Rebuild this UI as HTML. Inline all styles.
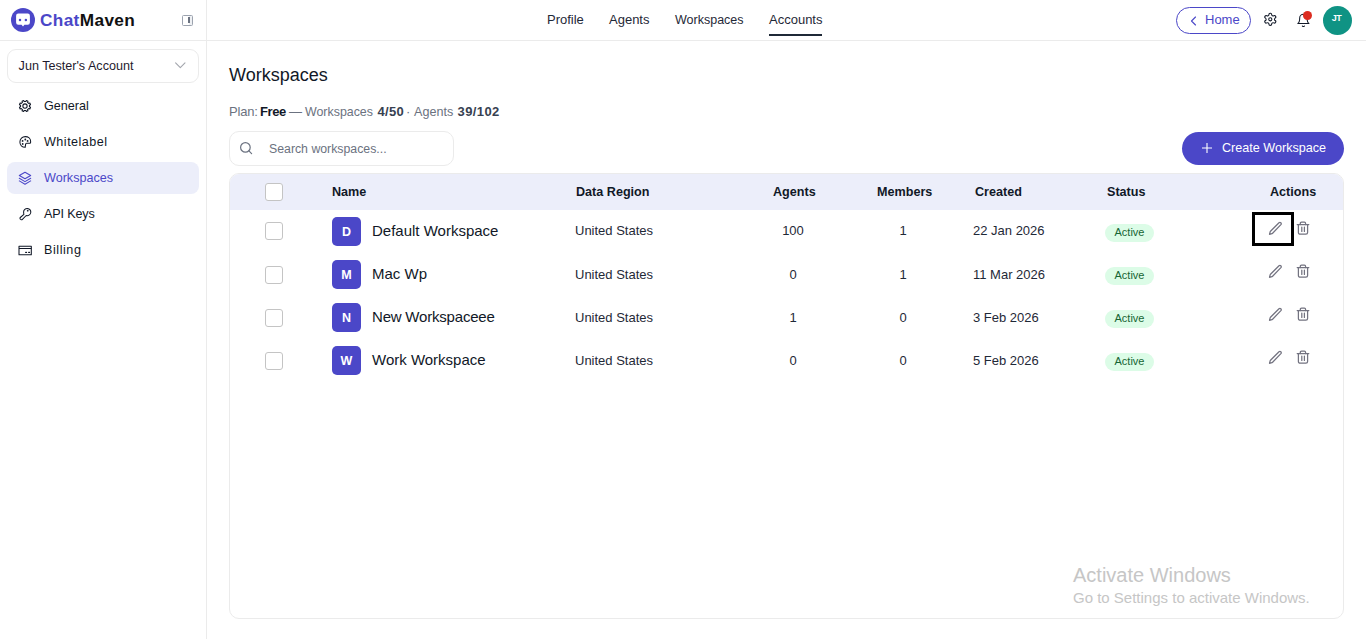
<!DOCTYPE html>
<html><head><meta charset="utf-8">
<style>
*{box-sizing:border-box;margin:0;padding:0}
html,body{width:1366px;height:639px;overflow:hidden;background:#fff;font-family:"Liberation Sans",sans-serif;color:#111827}
body{position:relative}
.abs,.ic{position:absolute}
.ic svg{display:block}
#side{position:absolute;left:0;top:0;width:207px;height:639px;border-right:1px solid #ebebeb}
#hdr{position:absolute;left:0;top:40px;width:1366px;height:1px;background:#ebebeb}
.brand{position:absolute;left:39.8px;top:11px;font-size:16px;font-weight:bold;letter-spacing:0.35px;line-height:20px;white-space:nowrap;transform:scaleX(1.075);transform-origin:0 0}
.sel{position:absolute;left:7px;top:49px;width:192px;height:34px;border:1px solid #ebebeb;border-radius:9px}
.t13{position:absolute;font-size:13px;line-height:16px;white-space:nowrap}
.navbg{position:absolute;left:7px;top:162px;width:192px;height:32px;border-radius:8px;background:#eceefa}
.sn{position:absolute;left:44px;font-size:12.6px;line-height:16px;color:#111827;white-space:nowrap}
.tnav{position:absolute;top:12px;font-size:13px;line-height:16px;color:#1f2937;white-space:nowrap}
.home{position:absolute;left:1176px;top:7px;width:75px;height:27px;border:1px solid #4b47c8;border-radius:14px}
.avatar{position:absolute;left:1323px;top:6px;width:29px;height:29px;border-radius:50%;background:#0f9384;color:#fff;font-size:9px;font-weight:bold;text-align:center;line-height:25.8px;letter-spacing:-0.6px;text-indent:-2px}
.h1{position:absolute;left:229px;top:65px;font-size:18px;line-height:20px;color:#111827;white-space:nowrap}
.pl{position:absolute;top:104px;font-size:13px;line-height:16px;color:#6b7280;white-space:nowrap}
.search{position:absolute;left:229px;top:131px;width:225px;height:35px;border:1px solid #ebebeb;border-radius:10px}
.create{position:absolute;left:1182px;top:132px;width:162px;height:33px;border-radius:16.5px;background:#4b47c8}
.table{position:absolute;left:229px;top:173px;width:1115px;height:446px;border:1px solid #ebebeb;border-radius:10px;overflow:hidden}
.thead{position:absolute;left:0;top:0;width:100%;height:36px;background:#eceefa}
.th{position:absolute;top:184px;font-size:12.6px;font-weight:bold;line-height:16px;color:#111827;white-space:nowrap}
.cb{position:absolute;width:18px;height:18px;border:1px solid #c4c4c4;border-radius:3px;background:#fff}
.av{position:absolute;left:332px;width:29px;height:29px;border-radius:5px;background:#4b47c8;color:#fff;font-size:12.5px;font-weight:bold;text-align:center;line-height:30.5px}
.nm{position:absolute;left:372px;font-size:15px;line-height:17px;color:#111827;white-space:nowrap}
.td{position:absolute;font-size:13px;line-height:16px;color:#1f2937;white-space:nowrap}
.badge{position:absolute;left:1105px;width:49px;height:18px;border-radius:9px;background:#dcfce7;color:#166534;font-size:11px;line-height:16px;text-align:center}
.wm1{position:absolute;left:1073px;top:564.3px;font-size:20px;line-height:23px;color:#c6c6c6;white-space:nowrap}
.wm2{position:absolute;left:1073px;top:589px;font-size:15px;line-height:17px;color:#c6c6c6;white-space:nowrap}
</style></head><body>
<div id="side"></div>
<div id="hdr"></div>
<!-- logo -->
<svg class="abs" style="left:11px;top:8px" width="24" height="24" viewBox="0 0 24 24">
  <circle cx="12" cy="12" r="12" fill="#4b47c8"/>
  <path d="M7.3 5.6h9.4a2.2 2.2 0 0 1 2.2 2.2v6.8a2.2 2.2 0 0 1-2.2 2.2h-3.3l-1.4 1.6l-1.4-1.6h-3.3a2.2 2.2 0 0 1-2.2-2.2v-6.8a2.2 2.2 0 0 1 2.2-2.2z" fill="#fff"/>
  <circle cx="9" cy="11.9" r="1.25" fill="#4b47c8"/><circle cx="14.9" cy="11.9" r="1.25" fill="#4b47c8"/>
</svg>
<div class="brand"><span style="color:#4b47c8">Chat</span><span style="color:#111">Maven</span></div>
<!-- collapse icon -->
<div class="abs" style="left:182px;top:15px;width:11px;height:11px;border:1.2px solid #9ca3af;border-radius:1.5px"></div>
<div class="abs" style="left:189px;top:16px;width:3px;height:9px;background:#eef0f3"></div><div class="abs" style="left:188px;top:17px;width:2px;height:6px;background:#6b7280"></div>

<div class="sel"></div>
<div class="t13" style="left:18.6px;top:57.5px;font-size:12.6px;color:#1f1b2e">Jun Tester's Account</div>
<svg class="abs" style="left:170px;top:56px" width="20" height="20" viewBox="170 56 20 20" fill="none" stroke="#a3a6ad" stroke-width="1.1" stroke-linecap="round" stroke-linejoin="round"><path d="M175.6 62.8l4.7 4.9l4.7-4.9"/></svg>

<div class="navbg"></div>
<svg class="abs" style="left:18px;top:99px" width="14" height="14" viewBox="0 0 14 14" fill="none" stroke="#111827" stroke-width="1.05" stroke-linejoin="round"><path d="M12.54 8.33 L11.86 9.98 L10.70 9.56 L9.56 10.70 L9.98 11.86 L8.33 12.54 L7.81 11.43 L6.19 11.43 L5.67 12.54 L4.02 11.86 L4.44 10.70 L3.30 9.56 L2.14 9.98 L1.46 8.33 L2.57 7.81 L2.57 6.19 L1.46 5.67 L2.14 4.02 L3.30 4.44 L4.44 3.30 L4.02 2.14 L5.67 1.46 L6.19 2.57 L7.81 2.57 L8.33 1.46 L9.98 2.14 L9.56 3.30 L10.70 4.44 L11.86 4.02 L12.54 5.67 L11.43 6.19 L11.43 7.81Z"/><circle cx="7" cy="7" r="2.15"/></svg>
<div class="sn" style="top:97.5px">General</div>
<svg class="abs" style="left:18px;top:135px" width="14" height="14" viewBox="0 0 14 14" fill="none" stroke="#111827" stroke-width="1.05" stroke-linecap="round" stroke-linejoin="round"><path d="M7.3 12.3C4 12.3 1.9 10 1.9 7c0-3.2 2.4-5.4 5.4-5.4 3 0 5.3 2 5.3 4.6v1.2c0 .5-.3.8-.8.8H8.6c-.5 0-.9.5-.9 1l-.1.4c-.1.6-.1 1.2-.3 1.7-.1.3 0 1-.1 1z"/><circle cx="4.6" cy="5.9" r=".38" fill="#111827"/><circle cx="7.3" cy="4.5" r=".38" fill="#111827"/><circle cx="9.6" cy="5.9" r=".38" fill="#111827"/><circle cx="4.7" cy="8.9" r=".38" fill="#111827"/></svg>
<div class="sn" style="top:133.5px;letter-spacing:0.48px">Whitelabel</div>
<svg class="abs" style="left:18px;top:171px" width="14" height="14" viewBox="0 0 14 14" fill="none" stroke="#4b47c8" stroke-width="1.05" stroke-linecap="round" stroke-linejoin="round"><path d="M7 1.2L1.3 4.5L7 7.8l5.7-3.3z"/><path d="M1.3 7.3L7 10.6l5.7-3.3"/><path d="M1.3 9.9L7 13.2l5.7-3.3"/></svg>
<div class="sn" style="top:169.5px;color:#4b47c8">Workspaces</div>
<svg class="abs" style="left:18px;top:207px" width="14" height="14" viewBox="0 0 14 14" fill="none" stroke="#111827" stroke-width="1.05" stroke-linecap="round" stroke-linejoin="round"><path transform="translate(-0.6 0.8)" d="M6.2 4.2a3.6 3.6 0 1 1 2.6 3.5L5 11.6a1.3 1.3 0 0 1-2-.1l-.2-.3a1.1 1.1 0 0 1 .1-1.5L6.5 6.6C6.3 5.9 6.2 5 6.2 4.2z"/><circle cx="9.7" cy="3.7" r=".35" fill="#111827"/></svg>
<div class="sn" style="top:205.5px;letter-spacing:-0.15px">API Keys</div>
<svg class="abs" style="left:18px;top:243px" width="14" height="14" viewBox="0 0 14 14" fill="none" stroke="#111827" stroke-width="1.05" stroke-linejoin="round"><path d="M1 3.3h12.3v8.4H1z"/><path d="M1 5.5h12.3"/><path d="M7.7 9.4h.8M10.7 9.4h.8" stroke-linecap="round" stroke-width="1.3"/></svg>
<div class="sn" style="top:241.5px;letter-spacing:0.55px">Billing</div>

<div class="tnav" style="left:547px">Profile</div>
<div class="tnav" style="left:609px">Agents</div>
<div class="tnav" style="left:675px;font-size:12.5px">Workspaces</div>
<div class="tnav" style="left:769px">Accounts</div>
<div class="abs" style="left:769px;top:34.4px;width:53px;height:1.7px;background:#1f2937"></div>

<div class="home"></div>
<svg class="abs" style="left:1188.3px;top:14.6px" width="12" height="12" viewBox="0 0 24 24" fill="none" stroke="#4b47c8" stroke-width="2.2" stroke-linecap="round" stroke-linejoin="round"><path d="m15 4-8 8 8 8"/></svg>
<div class="t13" style="left:1205px;top:11.5px;color:#4b47c8">Home</div>
<svg class="abs" style="left:1262.6px;top:12.3px" width="14.6" height="14.6" viewBox="0 0 24 24" fill="none" stroke="#111827" stroke-width="1.75" stroke-linecap="round" stroke-linejoin="round"><path d="M12.22 2h-.44a2 2 0 0 0-2 2v.18a2 2 0 0 1-1 1.73l-.43.25a2 2 0 0 1-2 0l-.15-.08a2 2 0 0 0-2.73.73l-.22.38a2 2 0 0 0 .73 2.73l.15.1a2 2 0 0 1 1 1.72v.51a2 2 0 0 1-1 1.74l-.15.09a2 2 0 0 0-.73 2.73l.22.38a2 2 0 0 0 2.73.73l.15-.08a2 2 0 0 1 2 0l.43.25a2 2 0 0 1 1 1.73V20a2 2 0 0 0 2 2h.44a2 2 0 0 0 2-2v-.18a2 2 0 0 1 1-1.73l.43-.25a2 2 0 0 1 2 0l.15.08a2 2 0 0 0 2.73-.73l.22-.39a2 2 0 0 0-.73-2.73l-.15-.08a2 2 0 0 1-1-1.74v-.5a2 2 0 0 1 1-1.74l.15-.09a2 2 0 0 0 .73-2.73l-.22-.38a2 2 0 0 0-2.73-.73l-.15.08a2 2 0 0 1-2 0l-.43-.25a2 2 0 0 1-1-1.73V4a2 2 0 0 0-2-2z"/><circle cx="12" cy="12" r="2.6"/></svg>
<svg class="abs" style="left:1295.6px;top:12.6px" width="14.8" height="14.8" viewBox="0 0 24 24" fill="none" stroke="#111827" stroke-width="1.7" stroke-linecap="round" stroke-linejoin="round"><path d="M6 8a6 6 0 0 1 12 0c0 7 3 9 3 9H3s3-2 3-9"/><path d="M10.3 21a1.94 1.94 0 0 0 3.4 0"/></svg>
<div class="abs" style="left:1303px;top:11px;width:9px;height:9px;border-radius:50%;background:#dc2c20"></div>
<div class="avatar">JT</div>

<div class="h1">Workspaces</div>
<div class="pl" style="left:229px;letter-spacing:-0.2px">Plan:</div>
<div class="pl" style="left:260px;color:#111827;font-weight:bold;letter-spacing:-0.4px">Free</div>
<div class="pl" style="left:289px">— </div>
<div class="pl" style="left:305px;font-size:12.4px">Workspaces</div>
<div class="pl" style="left:377.5px;color:#374151;font-weight:bold;letter-spacing:0.3px">4/50</div>
<div class="pl" style="left:406px">·</div>
<div class="pl" style="left:414px;font-size:12.6px">Agents</div>
<div class="pl" style="left:457.5px;color:#374151;font-weight:bold;letter-spacing:0.4px">39/102</div>

<div class="search"></div>
<svg class="abs" style="left:238px;top:140px" width="16" height="16" viewBox="0 0 24 24" fill="none" stroke="#6b7280" stroke-width="1.8" stroke-linecap="round"><circle cx="11.1" cy="11.1" r="7.2"/><path d="M16.4 16.4l4 4"/></svg>
<div class="t13" style="left:269px;top:140.5px;font-size:12.3px;color:#6b7280">Search workspaces...</div>

<div class="create"></div>
<svg class="abs" style="left:1201px;top:142px" width="12" height="12" viewBox="0 0 12 12" fill="none" stroke="#fff" stroke-width="1.1"><path d="M6 1v10M1 6h10"/></svg>
<div class="t13" style="left:1222px;top:139.5px;font-size:12.6px;color:#fff">Create Workspace</div>

<div class="table"><div class="thead"></div></div>
<div class="cb" style="left:265px;top:183px"></div>
<div class="th" style="left:332px">Name</div>
<div class="th" style="left:576px">Data Region</div>
<div class="th" style="left:773px">Agents</div>
<div class="th" style="left:877px">Members</div>
<div class="th" style="left:975px">Created</div>
<div class="th" style="left:1107px">Status</div>
<div class="th" style="left:1270px">Actions</div>
<div class="cb" style="left:265px;top:222px"></div>
<div class="av" style="top:217px">D</div>
<div class="nm" style="top:221.8px">Default Workspace</div>
<div class="td" style="left:575px;top:223.0px">United States</div>
<div class="td" style="left:743px;width:100px;text-align:center;top:223.0px">100</div>
<div class="td" style="left:853px;width:100px;text-align:center;top:223.0px">1</div>
<div class="td" style="left:973px;top:223.0px">22 Jan 2026</div>
<div class="badge" style="top:224px">Active</div>
<div class="ic" style="left:1267.7px;top:220.0px"><svg width="16" height="16" viewBox="0 0 16 16" fill="none" stroke="#737380" stroke-width="1.25" stroke-linecap="round" stroke-linejoin="round"><path d="M12.9 4.6a1.35 1.35 0 0 0-1.9-1.9L2.5 11.2c-.15.15-.25.3-.3.5L1.5 14.3l2.6-.75c.2-.05.35-.15.5-.3z"/></svg></div>
<div class="ic" style="left:1296px;top:221px"><svg width="14" height="16" viewBox="0 0 14 16" fill="none" stroke="#737380" stroke-width="1.25" stroke-linecap="round" stroke-linejoin="round"><path d="M1.2 3.5h11.6"/><path d="M2.4 3.5v8a1.7 1.7 0 0 0 1.7 1.7h5.8a1.7 1.7 0 0 0 1.7-1.7V3.5"/><path d="M4.3 3.5V2.4a1.2 1.2 0 0 1 1.2-1.2h2.9a1.2 1.2 0 0 1 1.2 1.2v1.1"/><path d="M5.8 6v4.4M8.4 6v4.4"/></svg></div>
<div class="cb" style="left:265px;top:266px"></div>
<div class="av" style="top:260px">M</div>
<div class="nm" style="top:265.3px">Mac Wp</div>
<div class="td" style="left:575px;top:266.5px">United States</div>
<div class="td" style="left:743px;width:100px;text-align:center;top:266.5px">0</div>
<div class="td" style="left:853px;width:100px;text-align:center;top:266.5px">1</div>
<div class="td" style="left:973px;top:266.5px">11 Mar 2026</div>
<div class="badge" style="top:267px">Active</div>
<div class="ic" style="left:1267.7px;top:263.0px"><svg width="16" height="16" viewBox="0 0 16 16" fill="none" stroke="#737380" stroke-width="1.25" stroke-linecap="round" stroke-linejoin="round"><path d="M12.9 4.6a1.35 1.35 0 0 0-1.9-1.9L2.5 11.2c-.15.15-.25.3-.3.5L1.5 14.3l2.6-.75c.2-.05.35-.15.5-.3z"/></svg></div>
<div class="ic" style="left:1296px;top:264px"><svg width="14" height="16" viewBox="0 0 14 16" fill="none" stroke="#737380" stroke-width="1.25" stroke-linecap="round" stroke-linejoin="round"><path d="M1.2 3.5h11.6"/><path d="M2.4 3.5v8a1.7 1.7 0 0 0 1.7 1.7h5.8a1.7 1.7 0 0 0 1.7-1.7V3.5"/><path d="M4.3 3.5V2.4a1.2 1.2 0 0 1 1.2-1.2h2.9a1.2 1.2 0 0 1 1.2 1.2v1.1"/><path d="M5.8 6v4.4M8.4 6v4.4"/></svg></div>
<div class="cb" style="left:265px;top:309px"></div>
<div class="av" style="top:303px">N</div>
<div class="nm" style="top:308.3px;letter-spacing:-0.2px">New Workspaceee</div>
<div class="td" style="left:575px;top:309.5px">United States</div>
<div class="td" style="left:743px;width:100px;text-align:center;top:309.5px">1</div>
<div class="td" style="left:853px;width:100px;text-align:center;top:309.5px">0</div>
<div class="td" style="left:973px;top:309.5px">3 Feb 2026</div>
<div class="badge" style="top:310px">Active</div>
<div class="ic" style="left:1267.7px;top:306.0px"><svg width="16" height="16" viewBox="0 0 16 16" fill="none" stroke="#737380" stroke-width="1.25" stroke-linecap="round" stroke-linejoin="round"><path d="M12.9 4.6a1.35 1.35 0 0 0-1.9-1.9L2.5 11.2c-.15.15-.25.3-.3.5L1.5 14.3l2.6-.75c.2-.05.35-.15.5-.3z"/></svg></div>
<div class="ic" style="left:1296px;top:307px"><svg width="14" height="16" viewBox="0 0 14 16" fill="none" stroke="#737380" stroke-width="1.25" stroke-linecap="round" stroke-linejoin="round"><path d="M1.2 3.5h11.6"/><path d="M2.4 3.5v8a1.7 1.7 0 0 0 1.7 1.7h5.8a1.7 1.7 0 0 0 1.7-1.7V3.5"/><path d="M4.3 3.5V2.4a1.2 1.2 0 0 1 1.2-1.2h2.9a1.2 1.2 0 0 1 1.2 1.2v1.1"/><path d="M5.8 6v4.4M8.4 6v4.4"/></svg></div>
<div class="cb" style="left:265px;top:352px"></div>
<div class="av" style="top:346px">W</div>
<div class="nm" style="top:351.3px">Work Workspace</div>
<div class="td" style="left:575px;top:352.5px">United States</div>
<div class="td" style="left:743px;width:100px;text-align:center;top:352.5px">0</div>
<div class="td" style="left:853px;width:100px;text-align:center;top:352.5px">0</div>
<div class="td" style="left:973px;top:352.5px">5 Feb 2026</div>
<div class="badge" style="top:353px">Active</div>
<div class="ic" style="left:1267.7px;top:349.0px"><svg width="16" height="16" viewBox="0 0 16 16" fill="none" stroke="#737380" stroke-width="1.25" stroke-linecap="round" stroke-linejoin="round"><path d="M12.9 4.6a1.35 1.35 0 0 0-1.9-1.9L2.5 11.2c-.15.15-.25.3-.3.5L1.5 14.3l2.6-.75c.2-.05.35-.15.5-.3z"/></svg></div>
<div class="ic" style="left:1296px;top:350px"><svg width="14" height="16" viewBox="0 0 14 16" fill="none" stroke="#737380" stroke-width="1.25" stroke-linecap="round" stroke-linejoin="round"><path d="M1.2 3.5h11.6"/><path d="M2.4 3.5v8a1.7 1.7 0 0 0 1.7 1.7h5.8a1.7 1.7 0 0 0 1.7-1.7V3.5"/><path d="M4.3 3.5V2.4a1.2 1.2 0 0 1 1.2-1.2h2.9a1.2 1.2 0 0 1 1.2 1.2v1.1"/><path d="M5.8 6v4.4M8.4 6v4.4"/></svg></div>
<div class="abs" style="left:1252px;top:212px;width:42px;height:34px;border:3px solid #000"></div>

<div class="wm1">Activate Windows</div>
<div class="wm2">Go to Settings to activate Windows.</div>
</body></html>
